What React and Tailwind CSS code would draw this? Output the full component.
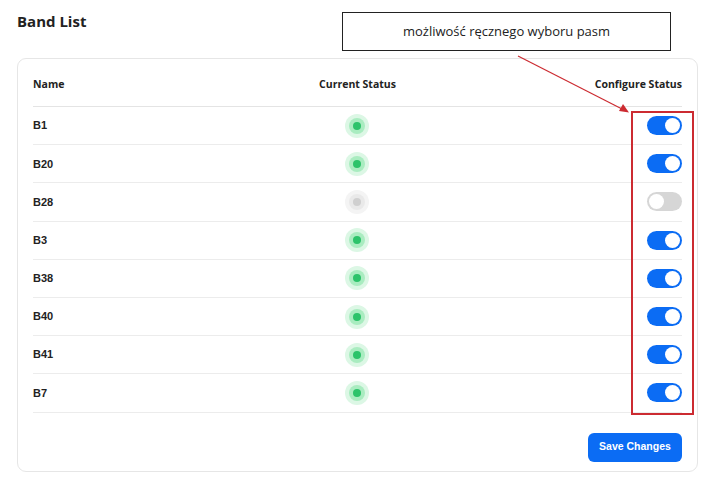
import React from 'react';

const bands = [
  { name: 'B1', active: true, enabled: true },
  { name: 'B20', active: true, enabled: true },
  { name: 'B28', active: false, enabled: false },
  { name: 'B3', active: true, enabled: true },
  { name: 'B38', active: true, enabled: true },
  { name: 'B40', active: true, enabled: true },
  { name: 'B41', active: true, enabled: true },
  { name: 'B7', active: true, enabled: true },
];

const StatusDot = ({ active }) => (
  <div className={`w-6 h-6 rounded-full flex items-center justify-center ${active ? 'bg-[#dcf7e5]' : 'bg-[#f4f4f4]'}`}>
    <div className={`w-4 h-4 rounded-full flex items-center justify-center ${active ? 'bg-[#a9ecc0]' : 'bg-[#e9e9e9]'}`}>
      <div className={`w-2 h-2 rounded-full ${active ? 'bg-[#2cc36a]' : 'bg-[#cfcfcf]'}`} />
    </div>
  </div>
);

const Toggle = ({ on }) => (
  <div className={`w-[35px] h-[19px] rounded-full p-[2px] flex items-center ${on ? 'bg-[#0b6cf4] justify-end' : 'bg-[#d6d6d6] justify-start'}`}>
    <div className="w-[15px] h-[15px] rounded-full bg-white" />
  </div>
);

export default function App() {
  return (
    <div className="relative w-[720px] h-[498px] bg-white font-['Liberation_Sans',Arial,sans-serif] text-[#222]">
      <div className="px-[17px] pt-[12px]">
        <h1 className="font-['Open_Sans',sans-serif] font-bold text-[15px] leading-[18px] text-[#222]">Band List</h1>

        <div className="mt-[28px] w-[681px] border border-[#e6e6e6] rounded-[9px] px-[15px] pb-[9px]">
          <div className="grid grid-cols-[1fr_1fr_1fr] items-center pt-[17px] pb-[14px] border-b border-[#e4e4e4] font-['Open_Sans',sans-serif] font-bold text-[10.5px] leading-[16px] text-[#222]">
            <div>Name</div>
            <div className="text-center">Current Status</div>
            <div className="text-right">Configure Status</div>
          </div>
          {bands.map((b) => (
            <div key={b.name} className="grid grid-cols-[1fr_1fr_1fr] items-center h-[38.2px] border-b border-[#ececec] font-bold text-[11px]">
              <div>{b.name}</div>
              <div className="flex justify-center">
                <StatusDot active={b.active} />
              </div>
              <div className="flex justify-end">
                <Toggle on={b.enabled} />
              </div>
            </div>
          ))}
          <div className="flex justify-end mt-[20px]">
            <button className="h-[29px] w-[94px] rounded-[6px] bg-[#0b6cf4] text-white font-bold text-[10.5px]">Save Changes</button>
          </div>
        </div>
      </div>

      <div className="absolute left-[342px] top-[12px] w-[329px] h-[39px] border-[1.5px] border-[#222] bg-white flex items-center justify-center font-['Open_Sans',sans-serif] text-[13px] text-[#222]">
        możliwość ręcznego wyboru pasm
      </div>

      <div className="absolute left-[631px] top-[111px] w-[63px] h-[304px] border-2 border-[#cc2b31]" />

      <svg className="absolute left-0 top-0" width="720" height="498" viewBox="0 0 720 498">
        <line x1="518" y1="56" x2="624" y2="110" stroke="#cc2b31" strokeWidth="1.2" />
        <polygon points="629,112.5 619,111 623,104" fill="#cc2b31" />
      </svg>
    </div>
  );
}
